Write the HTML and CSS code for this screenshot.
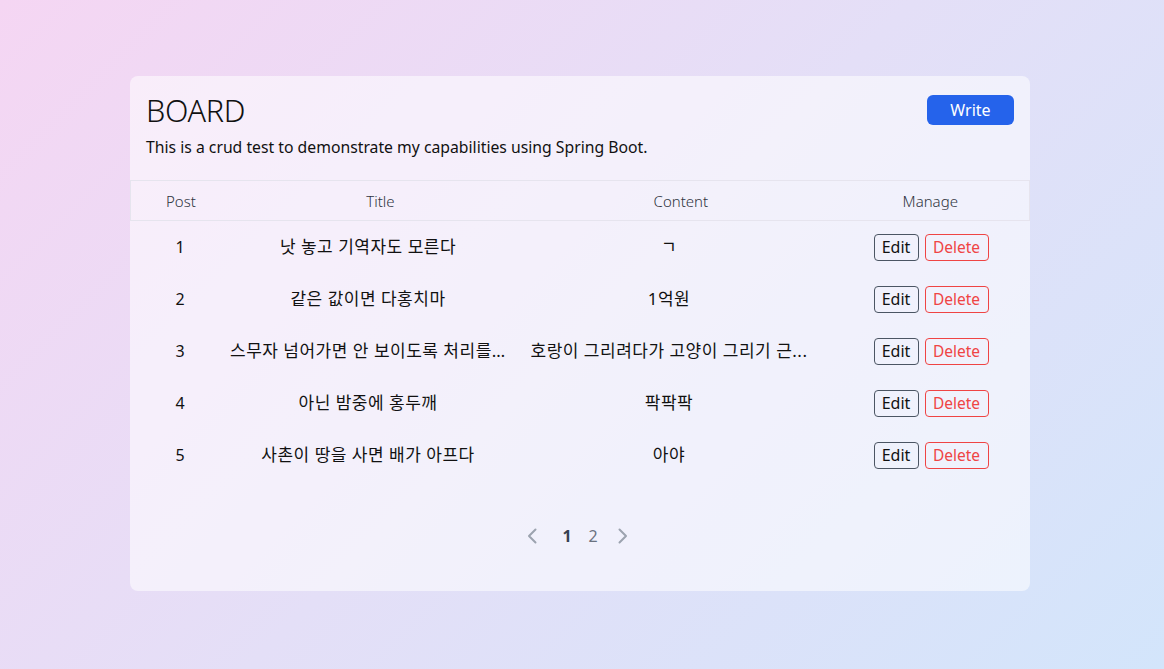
FILE: index.html
```html
<!DOCTYPE html>
<html lang="ko">
<head>
<meta charset="utf-8">
<title>Board</title>
<link rel="stylesheet" href="styles.css">
</head>
<body>
<div class="page">
  <main class="card">
    <header class="head">
      <div class="head-text">
        <h1 class="title">BOARD</h1>
        <p class="desc">This is a crud test to demonstrate my capabilities using Spring Boot.</p>
      </div>
      <button class="btn-write">Write</button>
    </header>

    <div class="table">
      <div class="row thead">
        <div class="c c-post">Post</div>
        <div class="c c-title th-shift">Title</div>
        <div class="c c-content th-shift">Content</div>
        <div class="c c-manage">Manage</div>
      </div>
      <div class="row">
        <div class="c c-post">1</div>
        <div class="c c-title"><span class="clip">낫 놓고 기역자도 모른다</span></div>
        <div class="c c-content"><span class="clip">ㄱ</span></div>
        <div class="c c-manage"><button class="btn-edit">Edit</button><button class="btn-del">Delete</button></div>
      </div>
      <div class="row">
        <div class="c c-post">2</div>
        <div class="c c-title"><span class="clip">같은 값이면 다홍치마</span></div>
        <div class="c c-content"><span class="clip">1억원</span></div>
        <div class="c c-manage"><button class="btn-edit">Edit</button><button class="btn-del">Delete</button></div>
      </div>
      <div class="row">
        <div class="c c-post">3</div>
        <div class="c c-title"><span class="clip">스무자 넘어가면 안 보이도록 처리를...</span></div>
        <div class="c c-content"><span class="clip">호랑이 그리려다가 고양이 그리기 근...</span></div>
        <div class="c c-manage"><button class="btn-edit">Edit</button><button class="btn-del">Delete</button></div>
      </div>
      <div class="row">
        <div class="c c-post">4</div>
        <div class="c c-title"><span class="clip">아닌 밤중에 홍두깨</span></div>
        <div class="c c-content"><span class="clip">팍팍팍</span></div>
        <div class="c c-manage"><button class="btn-edit">Edit</button><button class="btn-del">Delete</button></div>
      </div>
      <div class="row">
        <div class="c c-post">5</div>
        <div class="c c-title"><span class="clip">사촌이 땅을 사면 배가 아프다</span></div>
        <div class="c c-content"><span class="clip">아야</span></div>
        <div class="c c-manage"><button class="btn-edit">Edit</button><button class="btn-del">Delete</button></div>
      </div>
    </div>

    <nav class="pager">
      <svg class="chev chev-prev" width="10" height="16" viewBox="0 0 10 16"><polyline points="8.5,1.5 2,8 8.5,14.5" fill="none" stroke="#9ca3af" stroke-width="2" stroke-linecap="round" stroke-linejoin="round"/></svg>
      <span class="num num-active">1</span>
      <span class="num">2</span>
      <svg class="chev chev-next" width="10" height="16" viewBox="0 0 10 16"><polyline points="1.5,1.5 8,8 1.5,14.5" fill="none" stroke="#9ca3af" stroke-width="2" stroke-linecap="round" stroke-linejoin="round"/></svg>
    </nav>
  </main>
</div>
</body>
</html>
```

FILE: styles.css
```css
* { box-sizing: border-box; }

html, body {
  margin: 0;
  padding: 0;
}

body {
  width: 1164px;
  height: 669px;
  overflow: hidden;
  font-family: "Noto Sans", "Noto Sans CJK KR", sans-serif;
  color: #111827;
  background: linear-gradient(135deg, #f5d6f3 0%, #e4dff7 50%, #d3e5fb 100%);
}

.page {
  display: flex;
  justify-content: center;
  padding: 76px 4px 0 0;
}

.card {
  width: 900px;
  background: rgba(255, 255, 255, 0.55);
  border-radius: 8px;
  padding-bottom: 39px;
}

.head {
  display: flex;
  justify-content: space-between;
  align-items: flex-start;
  padding: 19px 16px 0 16px;
  height: 104px;
}

.head-text {
  margin-top: -3px;
}

.title {
  margin: 0;
  font-size: 30.5px;
  font-weight: 300;
  line-height: 36px;
  color: #111;
  letter-spacing: -0.3px;
}

.desc {
  margin: 9px 0 0 0;
  font-size: 15.75px;
  line-height: 20px;
  color: #111;
}

.btn-write {
  width: 87px;
  height: 30px;
  border: none;
  border-radius: 6px;
  background: #2563eb;
  color: #fff;
  font-family: inherit;
  font-size: 16px;
  line-height: 20px;
  padding: 0;
}

.table {
  display: flex;
  flex-direction: column;
}

.row {
  display: flex;
  height: 52px;
  align-items: center;
  font-size: 16px;
  color: #111;
}

.thead {
  height: 41px;
  border: 1px solid #e6e4ee;
  color: #2f3440;
  font-weight: 300;
  font-size: 15px;
}

.c {
  text-align: center;
  white-space: nowrap;
  overflow: hidden;
}

.c-post { width: 100px; }
.c-title { width: 276px; }
.c-content { width: 326px; }
.c-manage {
  width: 198px;
  display: flex;
  justify-content: center;
  gap: 6px;
}

.th-shift { padding-left: 24px; }

.clip {
  display: inline-block;
  max-width: 100%;
  overflow: hidden;
  text-overflow: ellipsis;
  font-size: 17px;
  letter-spacing: 0.5px;
  padding-top: 2px;
}

.btn-edit,
.btn-del {
  height: 27px;
  padding: 0;
  background: transparent;
  border-radius: 4px;
  font-family: inherit;
  font-size: 16px;
  line-height: 20px;
}

.btn-edit {
  width: 45px;
  border: 1px solid #4b5563;
  color: #111;
}

.btn-del {
  width: 64px;
  border: 1px solid #ef4444;
  color: #ef4444;
  font-size: 15.5px;
}

.pager {
  display: flex;
  justify-content: center;
  align-items: center;
  height: 32px;
  margin-top: 39px;
  padding-right: 5px;
}

.chev { display: block; }
.chev-prev { margin-right: 17px; }
.chev-next { margin-left: 12px; }

.num {
  width: 26px;
  text-align: center;
  font-size: 16px;
  color: #6b7280;
}

.num-active {
  font-weight: 700;
  color: #374151;
}
```
